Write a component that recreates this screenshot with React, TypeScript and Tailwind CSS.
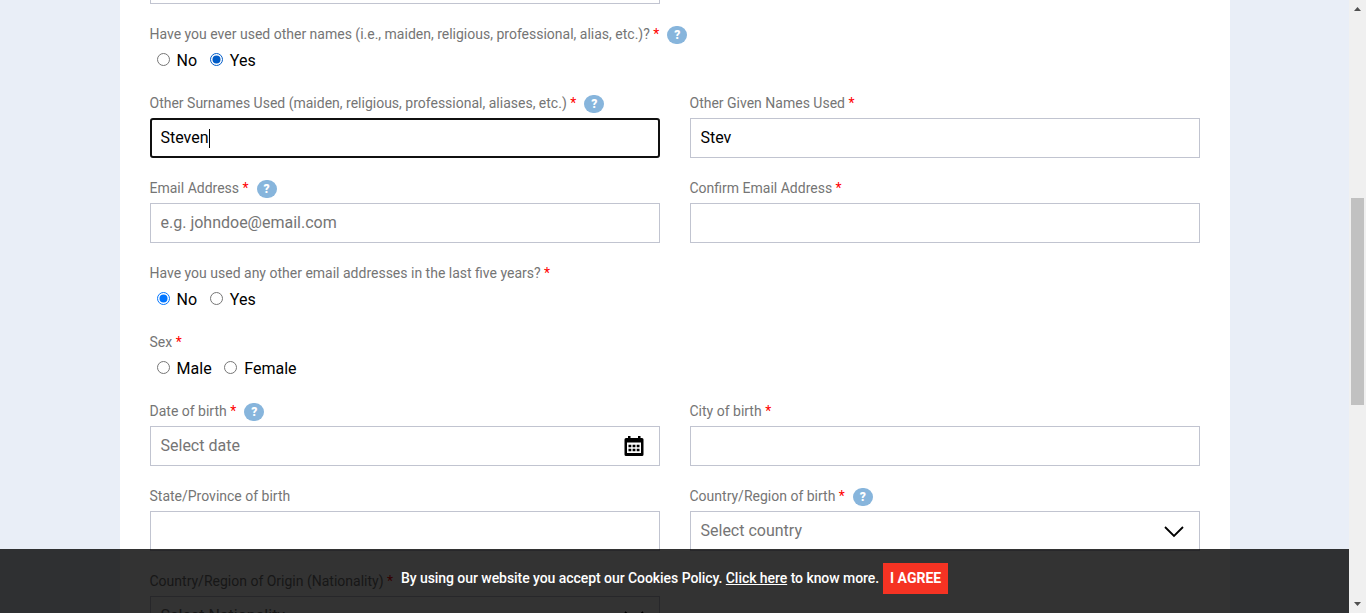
import type { ReactNode } from "react";

function Help() {
  return (
    <span className="ml-2 mt-[2px] flex h-[18px] w-5 shrink-0 items-center justify-center rounded-full bg-[#87b5dc] text-[12px] leading-none font-black text-white">
      ?
    </span>
  );
}

function Label({ text, required = true, help = false }: { text: string; required?: boolean; help?: boolean }) {
  return (
    <div className="-ml-[0.5px] flex h-[30px] items-center text-[14px] leading-5 whitespace-nowrap text-[#757575]">
      <span>
        {text}
        {required && <span className="text-[#ff0000]"> *</span>}
      </span>
      {help && <Help />}
    </div>
  );
}

function Calendar() {
  return (
    <svg className="h-5 w-5" viewBox="0 0 20 20">
      <path d="M4 0h2.500v2h7.500V0h2.500v2H18a1.500 1.500 0 0 1 1.500 1.500v15A1.500 1.500 0 0 1 18 20H2A1.500 1.500 0 0 1 .5 18.500v-15A1.500 1.500 0 0 1 2 2h2z" fill="#000" />
      <path d="M3 6.500h14V17H3z" fill="#fff" />
      <path d="M4.500 8.700h2.800v2.600H4.500zM8.600 8.700h2.800v2.600H8.600zM12.700 8.700h2.800v2.600h-2.800zM4.500 12.700h2.800v2.600H4.500zM8.600 12.700h2.800v2.600H8.600zM12.700 12.700h2.800v2.600h-2.800z" fill="#000" />
    </svg>
  );
}

function Chevron() {
  return (
    <svg className="h-5 w-5" viewBox="0 0 20 20">
      <path d="M1 6l9 9 9-9" fill="none" stroke="#000" strokeWidth="1.8" />
    </svg>
  );
}

type FieldProps = {
  label: string;
  value?: string;
  placeholder?: string;
  required?: boolean;
  help?: boolean;
  focused?: boolean;
  icon?: ReactNode;
};

function Field({ label, value, placeholder, required, help, focused, icon }: FieldProps) {
  return (
    <div className="h-[85px] w-[510px]">
      <Label text={label} required={required} help={help} />
      <div
        className={
          focused
            ? "flex h-10 items-center justify-between rounded-[3px] border-2 border-[#101010] pr-[14px] pl-[8.5px]"
            : "flex h-10 items-center justify-between border border-[#c1c4d0] pr-[15px] pl-[9.5px]"
        }
      >
        <span className="flex items-center text-[16px] leading-5">
          {value ? <span className="text-black">{value}</span> : <span className="text-[#757575]">{placeholder}</span>}
          {focused && <span className="h-[19px] w-px bg-black" />}
        </span>
        {icon}
      </div>
    </div>
  );
}

function Radio({ label, checked = false, color = "#0075ff" }: { label: string; checked?: boolean; color?: string }) {
  return (
    <span className="flex items-center">
      <svg className="mb-[2px] h-[13px] w-[13px]" viewBox="0 0 13 13">
        <circle cx="6.5" cy="6.5" r="6" fill="#fff" stroke={checked ? color : "#767676"} />
        {checked && <circle cx="6.5" cy="6.5" r="4" fill={color} />}
      </svg>
      <span className="ml-[7px] text-[16px] text-black">{label}</span>
    </span>
  );
}

function RadioGroup({ label, help, children }: { label: string; help?: boolean; children: ReactNode }) {
  return (
    <div className="h-[69px]">
      <Label text={label} help={help} />
      <div className="flex h-[23px] items-center gap-[12.7px] pl-[6.6px]">{children}</div>
    </div>
  );
}

function Row({ children }: { children: ReactNode }) {
  return <div className="flex gap-[30px]">{children}</div>;
}

export default function App() {
  return (
    <div className="relative flex h-[613px] w-[1366px] overflow-hidden bg-[#e9eef7] font-['Roboto',sans-serif]">
      <main className="ml-[120px] h-[613px] w-[1110px] shrink-0 overflow-hidden bg-white px-[30px]">
        <div className="mb-[15px] h-1 w-[510px] border-x border-b border-[#c1c4d0]" />
        <RadioGroup label="Have you ever used other names (i.e., maiden, religious, professional, alias, etc.)?" help>
          <Radio label="No" />
          <Radio label="Yes" checked color="#005cc8" />
        </RadioGroup>
        <Row>
          <Field label="Other Surnames Used (maiden, religious, professional, aliases, etc.)" value="Steven" help focused />
          <Field label="Other Given Names Used" value="Stev" />
        </Row>
        <Row>
          <Field label="Email Address" placeholder="e.g. johndoe@email.com" help />
          <Field label="Confirm Email Address" />
        </Row>
        <RadioGroup label="Have you used any other email addresses in the last five years?">
          <Radio label="No" checked />
          <Radio label="Yes" />
        </RadioGroup>
        <RadioGroup label="Sex">
          <Radio label="Male" />
          <Radio label="Female" />
        </RadioGroup>
        <Row>
          <Field label="Date of birth" placeholder="Select date" help icon={<Calendar />} />
          <Field label="City of birth" />
        </Row>
        <Row>
          <Field label="State/Province of birth" required={false} />
          <Field label="Country/Region of birth" placeholder="Select country" help icon={<Chevron />} />
        </Row>
        <Row>
          <Field label="Country/Region of Origin (Nationality)" placeholder="Select Nationality" icon={<Chevron />} />
        </Row>
      </main>

      <aside className="ml-auto flex w-[17px] flex-col items-center justify-between bg-[#f0f0f0]">
        <svg className="h-[17px] w-[17px]" viewBox="0 0 17 17">
          <path d="M5 11h7L8.500 7z" fill="#505050" />
        </svg>
        <div className="mt-[181px] mb-auto h-[207px] w-[13px] bg-[#c1c1c1]" />
        <svg className="h-[17px] w-[17px]" viewBox="0 0 17 17">
          <path d="M5 6h7L8.500 10z" fill="#505050" />
        </svg>
      </aside>

      <div className="absolute bottom-0 left-0 flex h-16 w-[1349px] items-start justify-center bg-black/80 pt-[14px] text-[14px] font-medium whitespace-nowrap text-white">
        <span className="tracking-[-0.055px] leading-[31px]">
          By using our website you accept our Cookies Policy. <a className="underline">Click here</a> to know more.
        </span>
        <button className="ml-1 h-[31px] w-[65px] bg-[#f53323] text-[14px] font-bold text-white">I AGREE</button>
      </div>
    </div>
  );
}
